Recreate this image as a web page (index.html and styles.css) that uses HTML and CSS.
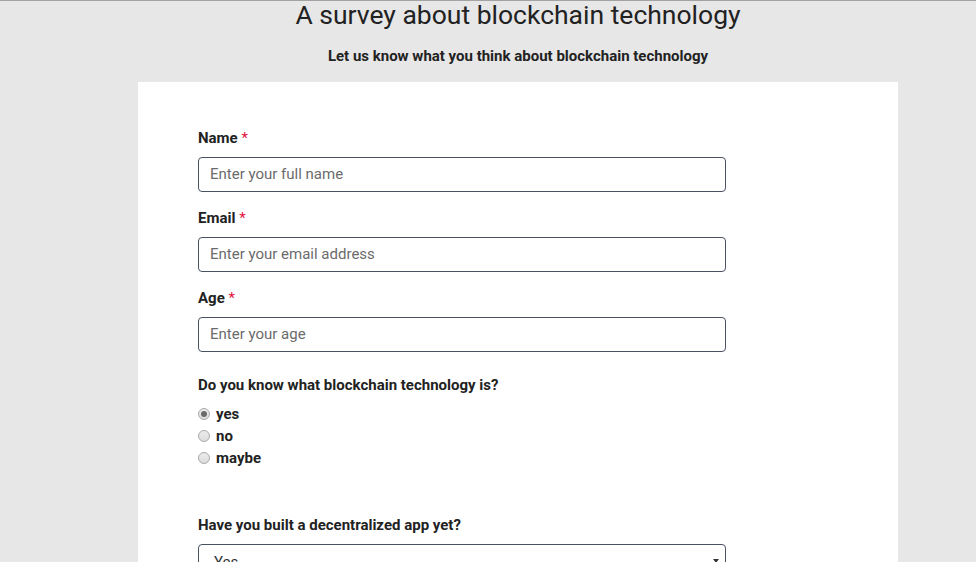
FILE: index.html
```html
<!DOCTYPE html>
<html lang="en">
<head>
<meta charset="utf-8">
<title>Survey</title>
<link rel="stylesheet" href="styles.css">
</head>
<body>
<div class="topline"></div>
<div class="page">
<header class="header">
  <h1 class="title">A survey about blockchain technology</h1>
  <p class="subtitle">Let us know what you think about blockchain technology</p>
</header>
<main class="card">
  <form class="form">
    <div class="field">
      <label class="label" for="name">Name <span class="req">*</span></label>
      <input class="input" id="name" type="text" placeholder="Enter your full name">
    </div>
    <div class="field">
      <label class="label" for="email">Email <span class="req">*</span></label>
      <input class="input" id="email" type="email" placeholder="Enter your email address">
    </div>
    <div class="field">
      <label class="label" for="age">Age <span class="req">*</span></label>
      <input class="input" id="age" type="number" placeholder="Enter your age">
    </div>
    <div class="group">
      <p class="label">Do you know what blockchain technology is?</p>
      <div class="radios">
        <label class="radio"><input type="radio" name="know" checked> yes</label>
        <label class="radio"><input type="radio" name="know"> no</label>
        <label class="radio"><input type="radio" name="know"> maybe</label>
      </div>
    </div>
    <div class="group2">
      <label class="label" for="built">Have you built a decentralized app yet?</label>
      <div class="select-wrap">
        <select class="select" id="built">
          <option>Yes</option>
          <option>No</option>
        </select>
        <span class="arrow"></span>
      </div>
    </div>
  </form>
</main>
</div>
</body>
</html>
```

FILE: styles.css
```css
* { box-sizing: border-box; }
html, body { margin: 0; padding: 0; }
body {
  background: #e7e7e7;
  font-family: Roboto, "Liberation Sans", Arial, sans-serif;
  color: #222;
  height: 562px;
  overflow: hidden;
}
.topline { height: 1px; background: #a3a3a3; }
.page { padding-left: 60px; }
.header { text-align: center; }
.title {
  margin: 0;
  font-size: 26.5px;
  font-weight: 400;
  line-height: 27px;
  color: #222;
}
.subtitle {
  margin: 16px 0 0;
  font-size: 15px;
  font-weight: 700;
  line-height: 24px;
  color: #222;
}
.card {
  background: #fff;
  width: 760px;
  margin: 14px auto 0;
  padding: 47px 60px 40px;
}
.form { display: flex; flex-direction: column; }
.field { display: flex; flex-direction: column; margin-bottom: 17px; }
.label {
  display: block;
  margin: 0;
  font-size: 15px;
  font-weight: 700;
  line-height: 18px;
  color: #222;
}
.req { color: #e0103d; font-weight: 400; }
.field .label { margin-bottom: 10px; }
.input {
  width: 528px;
  height: 35px;
  border: 1px solid #4a5160;
  border-radius: 4px;
  padding: 0 11px 1px;
  font-family: Roboto, "Liberation Sans", Arial, sans-serif;
  font-size: 15px;
  color: #333;
  background: #fff;
  outline: none;
}
.input::placeholder { color: #6b6b6b; }
.input::-webkit-outer-spin-button,
.input::-webkit-inner-spin-button { -webkit-appearance: none; margin: 0; }
.group { margin-top: 7px; }
.radios { display: flex; flex-direction: column; margin-top: 9px; }
.radio {
  display: flex;
  align-items: center;
  height: 22px;
  font-size: 15px;
  font-weight: 700;
  color: #222;
}
.radio input {
  -webkit-appearance: none;
  appearance: none;
  width: 12px;
  height: 12px;
  margin: 0 6px 0 0;
  border: 1px solid #a9a9a9;
  border-radius: 50%;
  background: linear-gradient(#ececec, #dcdcdc);
  display: grid;
  place-items: center;
}
.radio input:checked::after {
  content: "";
  width: 6px;
  height: 6px;
  border-radius: 50%;
  background: #6a6a6a;
}
.group2 { margin-top: 47px; }
.group2 .label { margin-bottom: 10px; }
.select-wrap { position: relative; width: 528px; }
.select {
  -webkit-appearance: none;
  appearance: none;
  width: 528px;
  height: 36px;
  border: 1px solid #4a5160;
  border-radius: 4px;
  padding: 0 15px;
  font-family: Roboto, "Liberation Sans", Arial, sans-serif;
  font-size: 15px;
  color: #333;
  background: #fff;
}
.arrow {
  position: absolute;
  right: 7px;
  top: 15px;
  width: 0;
  height: 0;
  border-left: 3px solid transparent;
  border-right: 3px solid transparent;
  border-top: 4px solid #333;
}
```
